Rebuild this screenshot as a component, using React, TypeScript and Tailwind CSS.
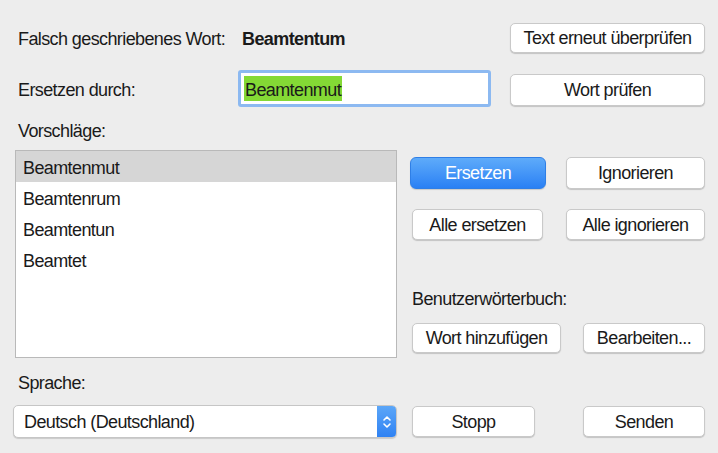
import React from "react";

const font = { fontFamily: '"Liberation Sans", Arial, sans-serif' };

function MacButton({
  children,
  className = "",
  primary = false,
}: {
  children: React.ReactNode;
  className?: string;
  primary?: boolean;
}) {
  if (primary) {
    return (
      <button
        className={`flex items-center justify-center rounded-[6px] border border-[#2f7fe6] bg-gradient-to-b from-[#5eabfa] to-[#2a80f4] pt-[1px] text-[18px] tracking-[-0.6px] text-white shadow-[0_1px_1px_rgba(0,0,0,0.15)] ${className}`}
      >
        {children}
      </button>
    );
  }
  return (
    <button
      className={`flex items-center justify-center rounded-[5px] border border-[#c9c9c9] bg-white pt-[1px] text-[18px] tracking-[-0.6px] text-[#1a1a1a] shadow-[0_1px_1px_rgba(0,0,0,0.18)] ${className}`}
    >
      {children}
    </button>
  );
}

export default function App() {
  const suggestions = ["Beamtenmut", "Beamtenrum", "Beamtentun", "Beamtet"];

  return (
    <div
      className="w-[718px] h-[453px] overflow-hidden bg-[#ededed] pl-[13px] pr-[13px] pt-[23px] text-[18px] tracking-[-0.6px] text-[#1a1a1a]"
      style={font}
    >
      {/* misspelled word */}
      <div className="flex h-[30px] items-center">
        <span className="ml-[5px] mt-[3px] w-[224px]">Falsch geschriebenes Wort:</span>
        <span className="mt-[3px] font-bold">Beamtentum</span>
        <MacButton className="ml-auto h-[30px] w-[195px]">Text erneut überprüfen</MacButton>
      </div>

      {/* replacement field */}
      <div className="mt-[17px] flex h-[37px] items-center">
        <span className="ml-[5px] mt-[3px] w-[220px]">Ersetzen durch:</span>
        <div className="flex h-[37px] w-[253px] items-center rounded-[3px] border-[3px] border-[#8cb9f1] bg-white pl-[3px]">
          <span className="flex h-[25px] items-center bg-[#84d935] px-[1px] pt-[2px] leading-none">Beamtenmut</span>
        </div>
        <MacButton className="ml-auto mt-[3px] h-[32px] w-[195px]">Wort prüfen</MacButton>
      </div>

      <div className="ml-[5px] mt-[14px] h-[20px] leading-[20px]">Vorschläge:</div>

      {/* suggestions list + actions */}
      <div className="mt-[9px] flex">
        <div className="ml-[2px] h-[208px] w-[382px] border border-[#b9b9b9] bg-white">
          {suggestions.map((s, i) => (
            <div
              key={s}
              className={`flex h-[31px] items-center pl-[7px] pt-[3px] ${i === 0 ? "bg-[#d6d6d6]" : ""}`}
            >
              {s}
            </div>
          ))}
        </div>

        <div className="ml-[13px] flex flex-1 flex-col">
          <div className="mt-[7px] flex">
            <MacButton primary className="h-[32px] w-[136px]">Ersetzen</MacButton>
            <MacButton className="ml-auto h-[32px] w-[139px]">Ignorieren</MacButton>
          </div>
          <div className="mt-[20px] flex">
            <MacButton className="ml-[2px] h-[31px] w-[131px]">Alle ersetzen</MacButton>
            <MacButton className="ml-auto h-[31px] w-[139px]">Alle ignorieren</MacButton>
          </div>
          <div className="ml-[2px] mt-[49px] h-[20px] leading-[20px]">Benutzerwörterbuch:</div>
          <div className="mt-[14px] flex">
            <MacButton className="ml-[2px] h-[30px] w-[149px]">Wort hinzufügen</MacButton>
            <MacButton className="ml-auto h-[30px] w-[122px]">Bearbeiten...</MacButton>
          </div>
        </div>
      </div>

      <div className="ml-[5px] mt-[15px] h-[20px] leading-[20px]">Sprache:</div>

      {/* language + bottom buttons */}
      <div className="mt-[12px] flex items-center">
        <div className="flex h-[33px] w-[384px] items-stretch overflow-hidden rounded-[5px] border border-[#c6c6c6] bg-white shadow-[0_1px_1px_rgba(0,0,0,0.15)]">
          <span className="flex flex-1 items-center pl-[10px] pt-[2px]">Deutsch (Deutschland)</span>
          <div className="flex w-[19px] items-center justify-center bg-gradient-to-b from-[#5ba6f8] to-[#2f82f3]">
            <svg width="10" height="16" viewBox="0 0 10 16" fill="none" stroke="white" strokeWidth="1.6" strokeLinecap="round" strokeLinejoin="round">
              <path d="M2 6 L5 3 L8 6" />
              <path d="M2 10 L5 13 L8 10" />
            </svg>
          </div>
        </div>
        <MacButton className="ml-[15px] h-[31px] w-[123px]">Stopp</MacButton>
        <MacButton className="ml-auto h-[31px] w-[122px]">Senden</MacButton>
      </div>
    </div>
  );
}
